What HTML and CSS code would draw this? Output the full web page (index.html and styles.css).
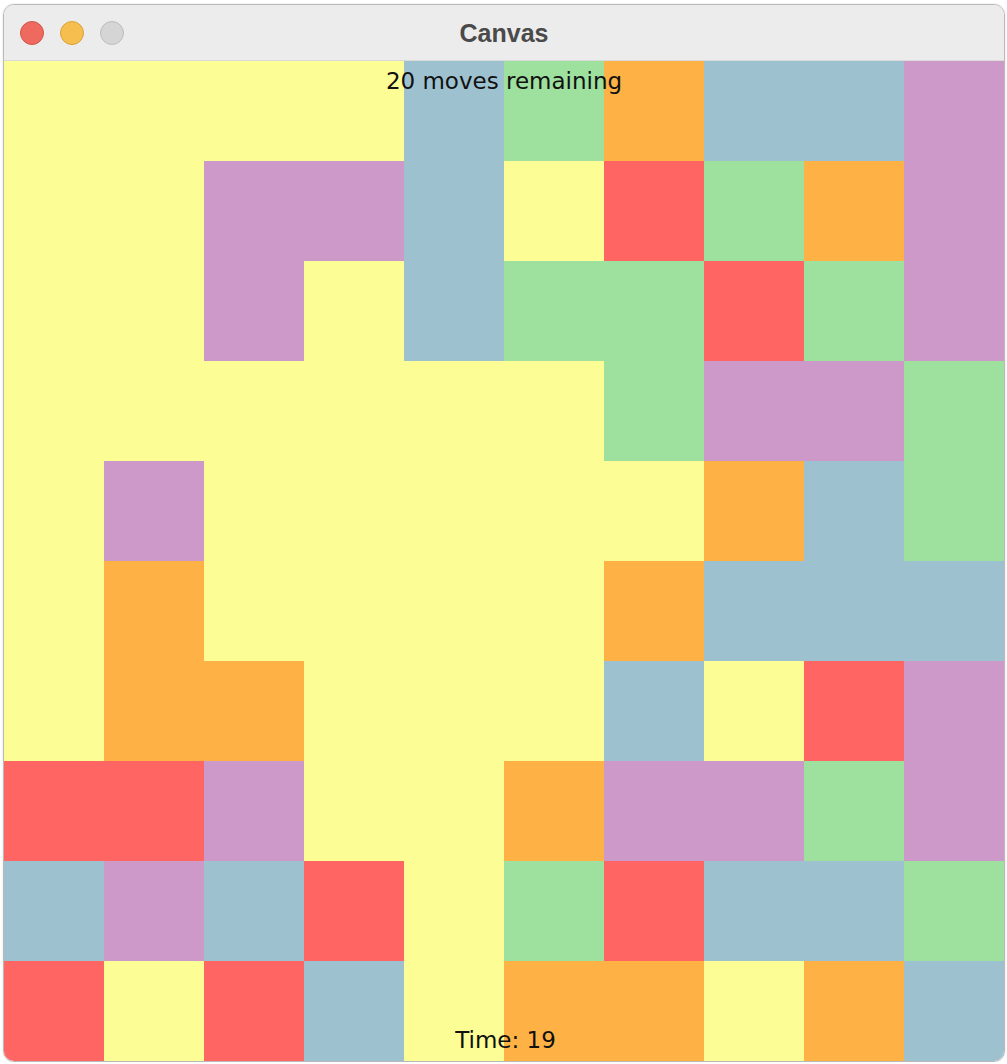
FILE: index.html
```html
<!DOCTYPE html>
<html lang="en">
<head>
  <meta charset="UTF-8">
  <title>Canvas</title>
  <link rel="stylesheet" href="styles.css">
</head>
<body>
  <div class="window">
    <div class="titlebar">
      <div class="lights">
        <span class="light close"></span>
        <span class="light min"></span>
        <span class="light max"></span>
      </div>
      <div class="title">Canvas</div>
    </div>

    <div class="board">
      <div class="grid" id="grid"></div>
      <div class="moves">20 moves remaining</div>
      <div class="timer">Time: 19</div>
    </div>
  </div>

  <script>
    var rows = [
      'YYYYBGOBBP',
      'YYPPBYRGOP',
      'YYPYBGGRGP',
      'YYYYYYGPPG',
      'YPYYYYYOBG',
      'YOYYYYOBBB',
      'YOOYYYBYRP',
      'RRPYYOPPGP',
      'BPBRYGRBBG',
      'RYRBYOOYOB'
    ];
    var names = { Y: 'yellow', B: 'blue', G: 'green', O: 'orange', R: 'red', P: 'purple' };
    var grid = document.getElementById('grid');
    rows.forEach(function (row) {
      row.split('').forEach(function (c) {
        var cell = document.createElement('div');
        cell.className = 'cell ' + names[c];
        grid.appendChild(cell);
      });
    });
  </script>
</body>
</html>
```

FILE: styles.css
```css
body {
  margin: 0;
  padding: 0;
  background: #ffffff;
  font-family: "DejaVu Sans", sans-serif;
}

.window {
  width: 1000px;
  margin: 4px 0 0 3px;
  border: 1px solid #b9b9b9;
  border-radius: 11px;
  overflow: hidden;
  box-shadow: 0 0 2px rgba(0, 0, 0, 0.15);
}

.titlebar {
  position: relative;
  height: 55px;
  background: #ececec;
  border-bottom: 1px solid #dadada;
  display: flex;
  align-items: center;
  justify-content: center;
}

.lights {
  position: absolute;
  left: 16px;
  top: 16px;
  display: flex;
  gap: 16px;
}

.light {
  width: 24px;
  height: 24px;
  border-radius: 50%;
  box-sizing: border-box;
}

.close {
  background: #ee6a5f;
  border: 1px solid #d25448;
}

.min {
  background: #f5be4f;
  border: 1px solid #d9a23b;
}

.max {
  background: #d5d5d5;
  border: 1px solid #bdbdbd;
}

.title {
  font-family: "Liberation Sans", Arial, sans-serif;
  font-weight: bold;
  font-size: 25px;
  color: #4a4a4a;
  margin-top: 1px;
}

.board {
  position: relative;
  width: 1000px;
  height: 1000px;
}

.grid {
  display: grid;
  grid-template-columns: repeat(10, 100px);
  grid-template-rows: repeat(10, 100px);
}

.yellow { background: #fdfd96; }
.blue { background: #9ec1cf; }
.green { background: #9ee09e; }
.orange { background: #feb144; }
.red { background: #ff6663; }
.purple { background: #cc99c9; }

.moves,
.timer {
  position: absolute;
  left: 0;
  right: 0;
  text-align: center;
  font-size: 23px;
  color: #111;
  line-height: 1;
}

.moves {
  top: 9px;
}

.timer {
  bottom: 9px;
  padding-left: 3px;
}
```
